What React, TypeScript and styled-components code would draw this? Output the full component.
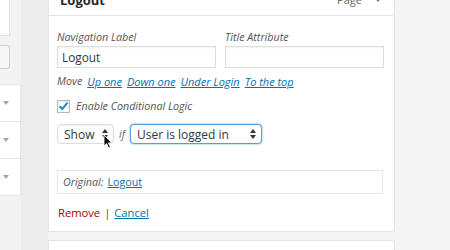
import React from 'react';
import styled, { createGlobalStyle } from 'styled-components';

const GlobalStyle = createGlobalStyle`
  html, body {
    margin: 0;
    padding: 0;
    background: #f1f1f1;
    font-family: "Open Sans", "Noto Sans", sans-serif;
    color: #32373c;
    overflow: hidden;
  }
`;

const Arrows = () => (
  <svg width="6" height="10" viewBox="0 0 6 10">
    <path d="M3 0 L6 4 L0 4 Z" fill="#333" />
    <path d="M3 10 L6 6 L0 6 Z" fill="#333" />
  </svg>
);

const Pointer = () => (
  <svg width="10" height="15" viewBox="0 0 10 15">
    <path d="M1 1 L1 12 L3.6 9.6 L5.6 14 L7.4 13.2 L5.4 8.9 L8.8 8.8 Z" fill="#111" stroke="#fff" strokeWidth="0.8" />
  </svg>
);

const App = () => {
  return (
    <>
      <GlobalStyle />
      <Page>
        <LeftColumn>
          <TopBox />
          <SmallButton />
          <ListRow><DownTri /></ListRow>
          <ListRow><DownTri /></ListRow>
          <ListRow><DownTri /></ListRow>
        </LeftColumn>
        <Gutter />
        <MainColumn>
          <ItemHeader>
            <ItemTitle>Logout</ItemTitle>
            <ItemType>Page <HeadTri /></ItemType>
          </ItemHeader>
          <Settings>
            <FieldRow>
              <Field>
                <Label>Navigation Label</Label>
                <TextBox>Logout</TextBox>
              </Field>
              <Field>
                <Label>Title Attribute</Label>
                <TextBox />
              </Field>
            </FieldRow>
            <MoveRow>
              <Hint>Move</Hint>
              <MoveLink>Up one</MoveLink>
              <MoveLink>Down one</MoveLink>
              <MoveLink>Under Login</MoveLink>
              <MoveLink>To the top</MoveLink>
            </MoveRow>
            <CheckRow>
              <CheckBox>
                <svg width="11" height="10" viewBox="0 0 11 10">
                  <path d="M1.5 5.2 L4.2 8 L9.6 1.6" fill="none" stroke="#1e8cbe" strokeWidth="2" />
                </svg>
              </CheckBox>
              <Hint>Enable Conditional Logic</Hint>
            </CheckRow>
            <LogicRow>
              <SelectBox $width={57}>
                Show
                <Arrows />
                <CursorSpot><Pointer /></CursorSpot>
              </SelectBox>
              <IfText>if</IfText>
              <SelectBox $width={132} $focused>
                User is logged in
                <Arrows />
              </SelectBox>
            </LogicRow>
            <OriginalBox>
              <Hint>Original:</Hint>
              <OriginalLink>Logout</OriginalLink>
            </OriginalBox>
            <Actions>
              <RemoveLink>Remove</RemoveLink>
              <Sep>|</Sep>
              <CancelLink>Cancel</CancelLink>
            </Actions>
          </Settings>
          <NextItem />
        </MainColumn>
      </Page>
    </>
  );
};

const Page = styled.div`
  display: flex;
  width: 450px;
  height: 250px;
  background: #f5f5f5;
  overflow: hidden;
`;

const LeftColumn = styled.div`
  width: 21px;
  flex-shrink: 0;
  display: flex;
  flex-direction: column;
  background: #f3f3f3;
`;

const TopBox = styled.div`
  flex-shrink: 0;
  width: 9px;
  height: 35px;
  background: #fff;
  border-right: 1px solid #e2e2e2;
  border-bottom: 1px solid #e2e2e2;
`;

const SmallButton = styled.div`
  flex-shrink: 0;
  margin-top: 9px;
  width: 9px;
  height: 22px;
  background: #f7f7f7;
  border: 1px solid #cfcfcf;
  border-left: none;
  border-radius: 0 3px 3px 0;
`;

const ListRow = styled.div`
  flex-shrink: 0;
  height: 36px;
  background: #fff;
  border-bottom: 1px solid #e5e5e5;
  border-right: 1px solid #e5e5e5;
  display: flex;
  align-items: center;
  padding-left: 3px;
  &:nth-child(3) {
    margin-top: 15px;
    border-top: 1px solid #e5e5e5;
  }
`;

const DownTri = styled.span`
  width: 0;
  height: 0;
  border-left: 3px solid transparent;
  border-right: 3px solid transparent;
  border-top: 4px solid #a0a5aa;
`;

const Gutter = styled.div`
  width: 27px;
  flex-shrink: 0;
  background: #ececec;
`;

const MainColumn = styled.div`
  width: 347px;
  flex-shrink: 0;
  display: flex;
  flex-direction: column;
`;

const ItemHeader = styled.div`
  flex-shrink: 0;
  margin-top: -17px;
  height: 33px;
  background: #fff;
  border: 1px solid #e3e3e3;
  display: flex;
  align-items: center;
  justify-content: space-between;
  padding: 0 12px 0 11px;
  box-sizing: border-box;
`;

const ItemTitle = styled.span`
  font-weight: 700;
  font-size: 13px;
  color: #23282d;
`;

const ItemType = styled.span`
  font-size: 11px;
  color: #666;
  display: flex;
  align-items: center;
  gap: 12px;
`;

const HeadTri = styled.span`
  width: 0;
  height: 0;
  border-left: 4px solid transparent;
  border-right: 4px solid transparent;
  border-top: 5px solid #777;
`;

const Settings = styled.div`
  flex-shrink: 0;
  background: #fff;
  border: 1px solid #e3e3e3;
  border-top: none;
  height: 216px;
  box-sizing: border-box;
  padding: 14px 10px 0 8px;
  display: flex;
  flex-direction: column;
`;

const FieldRow = styled.div`
  display: flex;
  gap: 9px;
`;

const Field = styled.div`
  display: flex;
  flex-direction: column;
  gap: 2px;
`;

const Label = styled.span`
  font-size: 10.7px;
  font-style: italic;
  color: #555;
  line-height: 14px;
`;

const TextBox = styled.div`
  width: 159px;
  height: 22px;
  box-sizing: border-box;
  border: 1px solid #ddd;
  box-shadow: inset 0 1px 2px rgba(0, 0, 0, 0.05);
  font-size: 11.8px;
  line-height: 20px;
  padding-left: 4px;
  color: #32373c;
`;

const MoveRow = styled.div`
  margin-top: 5px;
  display: flex;
  gap: 5px;
  height: 16px;
  align-items: center;
  font-size: 11px;
`;

const Hint = styled.span`
  font-size: 10.7px;
  font-style: italic;
  color: #555;
`;

const MoveLink = styled.span`
  font-size: 11px;
  font-style: italic;
  color: #0073aa;
  text-decoration: underline;
`;

const CheckRow = styled.div`
  margin-top: 10px;
  display: flex;
  align-items: center;
  gap: 6px;
`;

const CheckBox = styled.span`
  width: 13px;
  height: 13px;
  box-sizing: border-box;
  border: 1px solid #b4b9be;
  background: #fff;
  display: flex;
  align-items: center;
  justify-content: center;
  box-shadow: inset 0 1px 2px rgba(0, 0, 0, 0.1);
`;

const LogicRow = styled.div`
  margin-top: 11px;
  display: flex;
  align-items: center;
  gap: 4px;
`;

const SelectBox = styled.div<{ $width: number; $focused?: boolean }>`
  position: relative;
  width: ${p => p.$width}px;
  height: 20px;
  box-sizing: border-box;
  border: 1px solid ${p => (p.$focused ? '#5b9dd9' : '#ddd')};
  box-shadow: ${p => (p.$focused ? '0 0 2px rgba(30, 140, 190, 0.8)' : 'inset 0 1px 2px rgba(0,0,0,0.05)')};
  border-radius: 4px;
  display: flex;
  align-items: center;
  justify-content: space-between;
  padding: 0 5px 0 6px;
  font-size: 12px;
  color: #32373c;
  background: #fff;
`;

const CursorSpot = styled.span`
  position: absolute;
  left: 45px;
  top: 9px;
  line-height: 0;
`;

const IfText = styled.span`
  font-size: 10.5px;
  font-style: italic;
  color: #666;
  padding: 0 1px;
`;

const OriginalBox = styled.div`
  margin-top: 26px;
  width: 326px;
  height: 24px;
  box-sizing: border-box;
  border: 1px solid #e5e5e5;
  display: flex;
  align-items: center;
  gap: 4px;
  padding-left: 5px;
`;

const OriginalLink = styled.span`
  font-size: 10.7px;
  color: #0073aa;
  text-decoration: underline;
`;

const Actions = styled.div`
  margin-top: 11px;
  display: flex;
  align-items: center;
  gap: 4px;
  font-size: 11.2px;
  padding-left: 1px;
`;

const RemoveLink = styled.span`
  color: #a00;
`;

const Sep = styled.span`
  color: #555;
`;

const CancelLink = styled.span`
  color: #0073aa;
  text-decoration: underline;
`;

const NextItem = styled.div`
  flex-shrink: 0;
  margin-top: 8px;
  height: 30px;
  background: #fff;
  border: 1px solid #e3e3e3;
`;

export default App;
